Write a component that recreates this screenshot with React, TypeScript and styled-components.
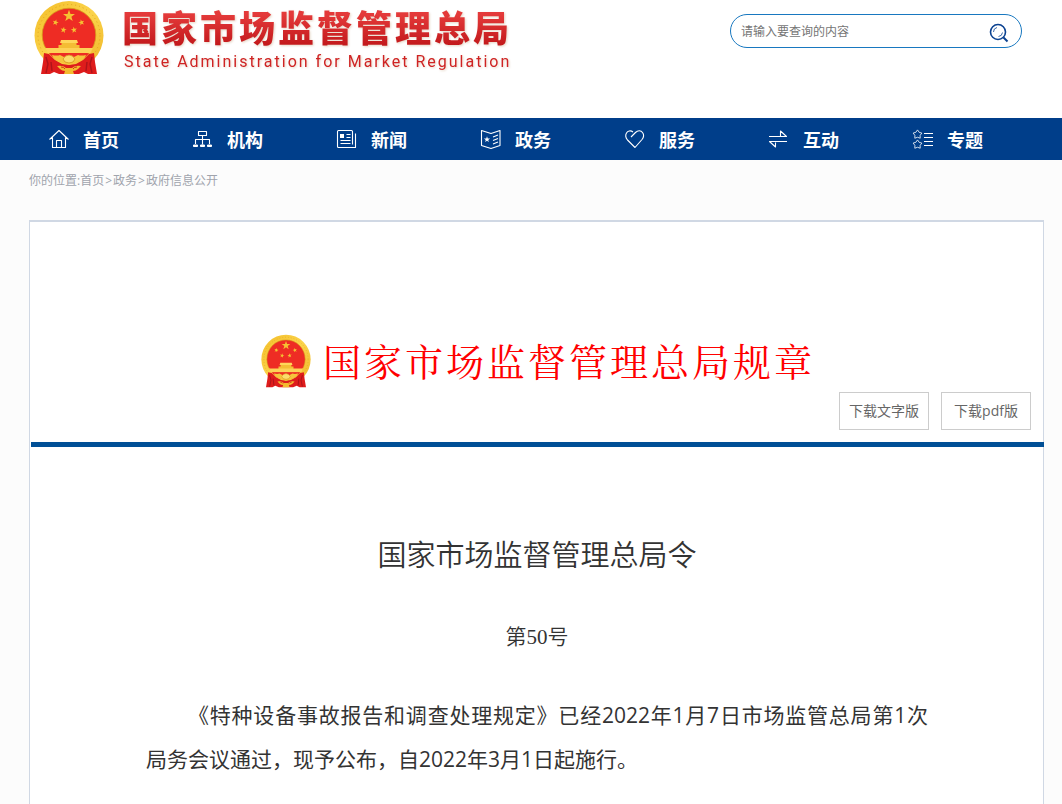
import React from 'react';
import styled, { createGlobalStyle } from 'styled-components';

const sans = '"Open Sans", "Noto Sans CJK SC", sans-serif';

const GlobalStyle = createGlobalStyle`
  *, *::before, *::after { box-sizing: border-box; }
  body {
    margin: 0;
    background: #fcfcfc;
    color: #333;
    font-family: ${sans};
    font-size: 12px;
  }
  h1, h2, p, ul { margin: 0; padding: 0; }
`;

const Header = styled.header`
  display: flex;
  justify-content: space-between;
  align-items: flex-start;
  height: 118px;
  padding: 0 40px 0 34px;
  background: #fff;
`;

const Brand = styled.a`
  display: flex;
  gap: 18px;
  color: #cf2323;
  text-decoration: none;
`;

const BrandText = styled.span`
  display: flex;
  flex-direction: column;
  padding-top: 8px;
  filter: drop-shadow(1px 1px 1px rgba(190, 150, 110, 0.4));
`;

const BrandName = styled.span`
  font-size: 36px;
  font-weight: 900;
  line-height: 42px;
  letter-spacing: 3px;
  white-space: nowrap;
  background: linear-gradient(#e43a3a 15%, #c2181b 90%);
  background-clip: text;
  color: transparent;
`;

const BrandLatin = styled.span`
  padding-left: 2px;
  font-family: Roboto, sans-serif;
  font-size: 16px;
  line-height: 24px;
  letter-spacing: 2px;
  white-space: nowrap;
`;

const SearchForm = styled.form`
  display: flex;
  align-items: center;
  width: 292px;
  height: 34px;
  margin-top: 14px;
  padding: 0 11px 0 10px;
  border: 1px solid #1878c0;
  border-radius: 17px;
`;

const SearchInput = styled.input`
  flex: 1;
  min-width: 0;
  height: 32px;
  padding: 0;
  border: 0;
  outline: 0;
  background: transparent;
  font: 12px/30px ${sans};
  color: #333;
  &::placeholder { color: #757575; opacity: 1; }
`;

const SearchButton = styled.button`
  display: flex;
  padding: 4px 0 0;
  border: 0;
  background: transparent;
  color: #0b4291;
`;

const Nav = styled.nav`
  padding: 0 4px 0 49px;
  background: #003e8a;
`;

const NavList = styled.ul`
  display: flex;
  list-style: none;
`;

const NavItem = styled.li`
  flex: 0 1 144px;
`;

const NavLink = styled.a`
  display: flex;
  align-items: center;
  gap: 14px;
  height: 42px;
  color: #fff;
  font-size: 18px;
  font-weight: 700;
  line-height: 40px;
  text-decoration: none;
  white-space: nowrap;
`;

const NavLabel = styled.span`
  padding-top: 2px;
`;

const Main = styled.main`
  padding: 0 18px 0 29px;
`;

const Breadcrumb = styled.nav`
  height: 60px;
  padding-top: 11px;
  color: #a0a4ad;
  line-height: 20px;
  a { color: inherit; text-decoration: none; }
`;

const Separator = styled.span`
  padding: 0 1px;
`;

const Card = styled.article`
  padding-left: 1px;
  border: 1px solid #d0d8e4;
  border-top-width: 2px;
  background: #fff;
`;

const Banner = styled.div`
  display: flex;
  justify-content: center;
  gap: 12px;
  padding: 112px 0 0 2px;
`;

const BannerTitle = styled.h1`
  height: 56px;
  color: #f00;
  font-family: "Noto Serif CJK SC", "Noto Sans CJK SC", serif;
  font-size: 38px;
  font-weight: 400;
  line-height: 52px;
  letter-spacing: 3px;
  white-space: nowrap;
`;

const Downloads = styled.div`
  display: flex;
  justify-content: flex-end;
  gap: 12px;
  padding: 2px 12px 12px;
`;

const DownloadButton = styled.button`
  width: 90px;
  height: 38px;
  padding: 0;
  border: 1px solid #ccc;
  background: #fff;
  color: #666;
  font: 14px/36px ${sans};
`;

const Rule = styled.hr`
  height: 5px;
  margin: 0 -1px 0 0;
  border: 0;
  background: #004f96;
`;

const Body = styled.div`
  padding: 84px 115px 44px;
`;

const DocTitle = styled.h2`
  font-size: 29px;
  font-weight: 350;
  line-height: 48px;
  text-align: center;
`;

const DocNumber = styled.p`
  margin-top: 36px;
  font-family: "Liberation Serif", "Noto Sans CJK SC", serif;
  font-size: 21px;
  font-weight: 350;
  line-height: 44px;
  text-align: center;
`;

const Paragraph = styled.p`
  margin-top: 34px;
  font-size: 21px;
  line-height: 44px;
  text-align: justify;
  text-indent: 2em;
`;

const Phrase = styled.span`
  white-space: nowrap;
`;

const star = (cx: number, cy: number, r: number, turn = 0, inner = 0.4) =>
  Array.from({ length: 10 }, (_, i) => {
    const a = ((i * 36 - 90 + turn) * Math.PI) / 180;
    const k = i % 2 ? r * inner : r;
    return `${(cx + k * Math.cos(a)).toFixed(2)},${(cy + k * Math.sin(a)).toFixed(2)}`;
  }).join(' ');

function Emblem({ width, height, id }: { width: number; height: number; id: string }) {
  const gold = `url(#${id})`;
  return (
    <svg width={width} height={height} viewBox="0 0 70 75" preserveAspectRatio="none" aria-hidden="true">
      <defs>
        <linearGradient id={id} x1="0" y1="0" x2="1" y2="1">
          <stop offset="0" stopColor="#f3bd28" />
          <stop offset="0.5" stopColor="#fbd44c" />
          <stop offset="1" stopColor="#efb526" />
        </linearGradient>
      </defs>
      <circle cx="35" cy="35.5" r="34.5" fill={gold} />
      <circle cx="35" cy="35.5" r="31" fill="none" stroke="#e2a31e" strokeWidth="1" strokeDasharray="1 3" />
      <circle cx="35" cy="35" r="26.8" fill="#ee2c24" stroke="#d79a1a" strokeWidth="0.8" />
      <g fill="#f5c232">
        <polygon points={star(35, 16, 6.3)} />
        <polygon points={star(21.5, 22.5, 3.2, 15)} />
        <polygon points={star(47.5, 22.5, 3.2, -15)} />
        <polygon points={star(29.5, 30, 3.2, 10)} />
        <polygon points={star(40, 30, 3.2, -10)} />
      </g>
      <path d="M27 40h16l1 3h-18z" fill="#ffd65a" />
      <path d="M27.500 43h15v2h3v3.500h-21V45h3z" fill="#f4bd34" />
      <path d="M11 48h48l-2.500 5h-43z" fill="#fdd257" />
      <path d="M15 53.500h40L48 60l-13 4-13-4z" fill="#ee2c24" />
      {/* draped ribbons */}
      <path d="M10 53l5 1 6 6 7 4 7 1 7-1 7-4 6-6 5-1 1 9 2 12h-9l-4-2-5 2H25l-5-2-4 2H7l2-12z" fill="#de1c1c" />
      <path d="M12 57l2 7-2 9M17 62l1 9M58 57l-2 7 2 9M53 62l-1 9" fill="none" stroke="#ae131a" strokeWidth="1.4" />
      {/* wheat stems meeting at the cog wheel */}
      <path d="M18 55q5 1 8 0l4 2h10l4-2q3 1 8 0-2 6-9 7l-8 3-8-3q-7-1-9-7z" fill="#f6c43c" />
      <path d="M29 59q2-4 6-4t6 4l-2 3-4 1-4-1z" fill="#fbdc6c" stroke="#d3921b" strokeWidth="0.8" />
      <path d="M23 66q6-1 9 2h6q3-3 9-2l-3 3q-2 2-5 2l1 3H30l1-3q-3 0-5-2z" fill="#f3bb2f" />
      <path d="M27 67q3 0 4 2M43 67q-3 0-4 2" fill="none" stroke="#cf2719" strokeWidth="0.9" />
    </svg>
  );
}

const icons: Record<string, React.ReactNode> = {
  home: (
    <path d="M.5 10.500L10 1.500l9.500 9M3.500 8.500v10h13v-10M7.500 18.500v-7h5v7" />
  ),
  org: (
    <>
      <path d="M5.500 2.500h8v4h-8zM9.500 6.500v9M2.500 15v-4.500h14V15" />
      <path d="M.500 16h4v1.500h-4zM7.500 16h4v1.500h-4zM14.500 16h4v1.500h-4z" fill="currentColor" strokeWidth="1" />
    </>
  ),
  news: (
    <>
      <path d="M15.500 18.500h-14a1 1 0 0 1-1-1v-15a1 1 0 0 1 1-1h13a1 1 0 0 1 1 1v13M18.500 4.500v14h-3M9.500 5.500h4M9.500 8.500h4M3.500 11.500h10M3.500 14.500h10" />
      <path d="M3 5h4v4H3z" fill="currentColor" stroke="none" />
    </>
  ),
  affairs: (
    <>
      <path d="M.500 1.500L10 4.500l9-3v15l-9 3-9.500-3zM12 8l5-2M12 11.500l5-2M12 15l5-2" />
      <polygon points={star(6, 10.5, 3.2)} fill="currentColor" stroke="none" />
    </>
  ),
  service: (
    <path d="M6 8l4.500-4.500C13 1 16 1.500 17.500 3.500s1.500 4.500-.500 7L10 18.500 2.500 11C.500 8.500.300 6 1.500 4S5.500 1 8 3" />
  ),
  interact: <path d="M0 7.500h17.500L11.500 2v5M18 12.500H.500L6.500 18v-4.500" />,
  topics: (
    <>
      <polygon points={star(4.5, 5.5, 4.6, 0, 0.6)} strokeWidth="0.8" />
      <polygon points={star(4.5, 15.5, 4.6, 0, 0.6)} strokeWidth="0.8" />
      <path d="M11 4.500h9M11 8.500h9M11 12.500h9M11 16.500h9" />
    </>
  ),
};

function NavIcon({ name }: { name: string }) {
  return (
    <svg
      width="20"
      height="20"
      viewBox="0 0 20 20"
      overflow="visible"
      fill="none"
      stroke="currentColor"
      strokeWidth="1.1"
      strokeLinejoin="round"
      aria-hidden="true"
    >
      {icons[name]}
    </svg>
  );
}

const navItems = [
  { icon: 'home', label: '首页' },
  { icon: 'org', label: '机构' },
  { icon: 'news', label: '新闻' },
  { icon: 'affairs', label: '政务' },
  { icon: 'service', label: '服务' },
  { icon: 'interact', label: '互动' },
  { icon: 'topics', label: '专题' },
];

export default function App() {
  return (
    <>
      <GlobalStyle />
      <Header>
        <Brand href="#">
          <Emblem width={70} height={75} id="gold-header" />
          <BrandText>
            <BrandName>国家市场监督管理总局</BrandName>
            <BrandLatin>State Administration for Market Regulation</BrandLatin>
          </BrandText>
        </Brand>
        <SearchForm role="search" onSubmit={(e) => e.preventDefault()}>
          <SearchInput type="text" aria-label="搜索" placeholder="请输入要查询的内容" autoFocus />
          <SearchButton type="submit" aria-label="查询">
            <svg width="22" height="20" viewBox="0 0 22 20" fill="none" stroke="currentColor" aria-hidden="true">
              <circle cx="10" cy="9" r="7.5" strokeWidth="1.6" />
              <path d="M15.500 14.500l4 4" strokeWidth="2" />
              <path d="M5.500 9A4.500 4.500 0 0 1 9 4.500M10.500 13.500A4.500 4.500 0 0 0 14.500 9.500" strokeWidth="0.8" />
            </svg>
          </SearchButton>
        </SearchForm>
      </Header>
      <Nav>
        <NavList>
          {navItems.map((item) => (
            <NavItem key={item.icon}>
              <NavLink href="#">
                <NavIcon name={item.icon} />
                <NavLabel>{item.label}</NavLabel>
              </NavLink>
            </NavItem>
          ))}
        </NavList>
      </Nav>
      <Main>
        <Breadcrumb>
          你的位置:<a href="#">首页</a>
          <Separator>&gt;</Separator>
          <a href="#">政务</a>
          <Separator>&gt;</Separator>
          <a href="#">政府信息公开</a>
        </Breadcrumb>
        <Card>
          <Banner>
            <Emblem width={50} height={54} id="gold-banner" />
            <BannerTitle>国家市场监督管理总局规章</BannerTitle>
          </Banner>
          <Downloads>
            <DownloadButton type="button">下载文字版</DownloadButton>
            <DownloadButton type="button">下载pdf版</DownloadButton>
          </Downloads>
          <Rule />
          <Body>
            <DocTitle>国家市场监督管理总局令</DocTitle>
            <DocNumber>第50号</DocNumber>
            <Paragraph>
              《特种设备事故报告和调查处理规定》已经2022年1月7日市场监管总局第1次<Phrase>局务会议通过</Phrase>，现予公布，自2022年3月1日起施行。
            </Paragraph>
          </Body>
        </Card>
      </Main>
    </>
  );
}
